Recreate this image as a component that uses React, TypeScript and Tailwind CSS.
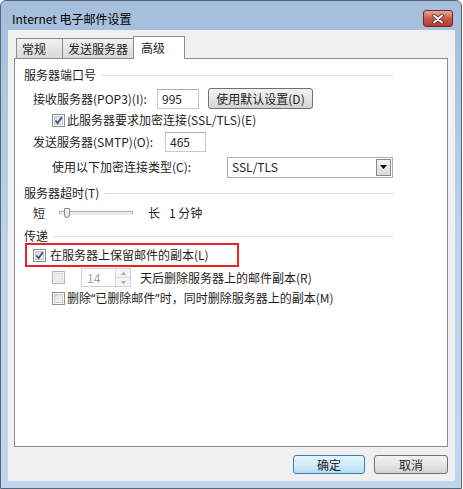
import React from 'react';

const font = "font-['Noto_Sans_CJK_SC','Noto_Sans',sans-serif]";

const CheckBox = ({ checked = false, disabled = false }: { checked?: boolean; disabled?: boolean }) => (
  <span
    className={`relative flex h-[13px] w-[13px] shrink-0 items-center justify-center border ${
      disabled ? 'border-[#b4b4b4] bg-[#f4f4f4]' : 'border-[#8e8f8f] bg-white'
    }`}
  >
    <span
      className={`h-[9px] w-[9px] border ${
        disabled
          ? 'border-[#e0e0e0] bg-[#eeeeee]'
          : 'border-[#c6c9ce] bg-gradient-to-br from-[#d9dce0] to-[#f7f7f7]'
      }`}
    />
    {checked && (
      <svg className="absolute left-0 top-0" width="11" height="11" viewBox="0 0 11 11">
        <path d="M2.5 5.5 L4.6 8.2 L8.8 2.2" fill="none" stroke="#3c4f86" strokeWidth="1.8" strokeLinejoin="round" />
      </svg>
    )}
  </span>
);

const GroupHeader = ({ label }: { label: string }) => (
  <div className="flex items-center pl-[9px]">
    <span className="whitespace-nowrap">{label}</span>
    <div className="ml-[5px] h-0 flex-1 border-t border-[#d5dfe5]" />
  </div>
);

const TextBox = ({ value, className }: { value: string; className: string }) => (
  <div
    className={`flex items-center border border-[#c4c8ce] border-t-[#abadb3] bg-white pl-[4px] ${className}`}
  >
    {value}
  </div>
);

const App = () => {
  return (
    <div className={`h-[489px] w-[463px] bg-white text-[12px] leading-[14px] text-[#1e1e1e] ${font}`}>
      <div className="flex h-[489px] w-[462px] flex-col rounded-t-[6px] border border-[#56667a] bg-gradient-to-b from-[#a4bedc] via-[#bcd3eb] to-[#bfd6ee]">
        {/* title bar */}
        <div className="flex h-[29px] shrink-0 items-start justify-between pl-[11px] pr-[8px]">
          <span className="mt-[11px] text-[12px] leading-[14px] text-black">Internet 电子邮件设置</span>
          <button className="mt-[9px] flex h-[17px] w-[30px] items-center justify-center rounded-[3px] border border-[#6a2a2a] bg-gradient-to-b from-[#e9a99b] via-[#c8584a] to-[#b93a2a]">
            <svg width="12" height="10" viewBox="0 0 12 10">
              <path d="M2 1.5 L10 8.5 M10 1.5 L2 8.5" stroke="#4b2121" strokeWidth="3.4" strokeLinecap="round" />
              <path d="M2 1.5 L10 8.5 M10 1.5 L2 8.5" stroke="#ffffff" strokeWidth="2" strokeLinecap="round" />
            </svg>
          </button>
        </div>

        {/* client area */}
        <div className="ml-[7px] flex h-[451px] w-[447px] flex-col bg-[#f0f0f0]">
          {/* tabs */}
          <div className="mt-[6px] flex h-[22px] items-end pl-[8px]">
            <div className="flex h-[20px] w-[47px] items-center border border-b-0 border-[#898c95] bg-gradient-to-b from-[#f2f2f2] to-[#d9d9d9] pl-[5px]">
              常规
            </div>
            <div className="-ml-px flex h-[20px] w-[72px] items-center border border-b-0 border-[#898c95] bg-gradient-to-b from-[#f2f2f2] to-[#d9d9d9] pl-[5px]">
              发送服务器
            </div>
            <div className="relative z-10 -mb-px -ml-px flex h-[23px] w-[52px] items-start border border-b-0 border-[#898c95] bg-white pl-[7px] pt-[4px]">
              高级
            </div>
          </div>

          {/* panel */}
          <div className="ml-[6px] flex h-[389px] w-[434px] flex-col border border-[#898c95] bg-white pr-[54px]">
            <div className="mt-[9px] h-[14px]">
              <GroupHeader label="服务器端口号" />
            </div>

            <div className="mt-[6px] flex h-[21px] items-center pl-[18px]">
              <span className="w-[124px] whitespace-nowrap">接收服务器(POP3)(I):</span>
              <TextBox value="995" className="h-[20px] w-[42px]" />
              <button className="ml-[9px] flex h-[21px] w-[105px] items-center justify-center rounded-[3px] border border-[#707070] bg-gradient-to-b from-[#f2f2f2] via-[#e6e6e6] to-[#d3d3d3]">
                使用默认设置(D)
              </button>
            </div>

            <div className="mt-[4px] flex h-[14px] items-center gap-[2px] pl-[37px]">
              <CheckBox checked />
              <span className="whitespace-nowrap">此服务器要求加密连接(SSL/TLS)(E)</span>
            </div>

            <div className="mt-[5px] flex h-[20px] items-center pl-[18px]">
              <span className="w-[132px] whitespace-nowrap">发送服务器(SMTP)(O):</span>
              <TextBox value="465" className="h-[20px] w-[41px]" />
            </div>

            <div className="mt-[5px] flex h-[20px] items-center pl-[37px]">
              <span className="w-[175px] whitespace-nowrap">使用以下加密连接类型(C):</span>
              <div className="flex h-[21px] w-[166px] items-center justify-between border border-[#abadb3] bg-white pl-[4px] pr-px">
                <span>SSL/TLS</span>
                <div className="flex h-[17px] w-[15px] items-center justify-center border border-[#8a8a8a] bg-gradient-to-b from-[#f4f4f4] to-[#dcdcdc]">
                  <svg width="7" height="4" viewBox="0 0 7 4">
                    <path d="M0 0 L7 0 L3.5 4 Z" fill="#000" />
                  </svg>
                </div>
              </div>
            </div>

            <div className="mt-[9px] h-[14px]">
              <GroupHeader label="服务器超时(T)" />
            </div>

            <div className="mt-[5px] flex h-[16px] items-center pl-[18px]">
              <span className="w-[26px]">短</span>
              <div className="relative flex h-[16px] w-[74px] items-center">
                <div className="h-[4px] w-full border border-[#b0b0b0] border-b-[#e7eaea] bg-[#e7eaea]" />
                <div className="absolute left-[5px] top-[3px] h-[10px] w-[6px] rounded-b-[3px] border border-[#8c8c8c] bg-gradient-to-b from-[#fbfbfb] to-[#d8d8d8]" />
              </div>
              <span className="ml-[15px]">长</span>
              <span className="ml-[9px] whitespace-nowrap">1 分钟</span>
            </div>

            <div className="mt-[10px] flex h-[12px] items-end">
              <div className="w-full">
                <GroupHeader label="传递" />
              </div>
            </div>

            <div className="ml-[10px] flex h-[24px] w-[214px] items-center gap-[4px] border-2 border-[#e8242a] pl-[6px]">
              <CheckBox checked />
              <span className="whitespace-nowrap">在服务器上保留邮件的副本(L)</span>
            </div>

            <div className="mt-[1px] flex h-[19px] items-center pl-[37px]">
              <CheckBox disabled />
              <div className="ml-[16px] flex h-[19px] w-[50px] items-center justify-between border border-[#d0d2d6] bg-white pl-[5px]">
                <span className="text-[#a0a0a0]">14</span>
                <div className="flex h-[17px] w-[15px] flex-col border-l border-[#dcdcdc]">
                  <div className="flex flex-1 items-center justify-center border-b border-[#dcdcdc] bg-[#f4f4f4]">
                    <svg width="5" height="3" viewBox="0 0 5 3">
                      <path d="M0 3 L5 3 L2.5 0 Z" fill="#a8a8a8" />
                    </svg>
                  </div>
                  <div className="flex flex-1 items-center justify-center bg-[#f4f4f4]">
                    <svg width="5" height="3" viewBox="0 0 5 3">
                      <path d="M0 0 L5 0 L2.5 3 Z" fill="#a8a8a8" />
                    </svg>
                  </div>
                </div>
              </div>
              <span className="ml-[9px] whitespace-nowrap">天后删除服务器上的邮件副本(R)</span>
            </div>

            <div className="mt-[3px] flex h-[16px] items-center gap-[2px] pl-[37px]">
              <CheckBox />
              <span className="whitespace-nowrap">
                删除<span className="font-['Noto_Sans',sans-serif]">“</span>已删除邮件
                <span className="font-['Noto_Sans',sans-serif]">”</span>时，同时删除服务器上的副本(M)
              </span>
            </div>
          </div>

          {/* buttons */}
          <div className="mt-[8px] flex justify-end gap-[9px] pr-[7px]">
            <button className="flex h-[19px] w-[72px] items-center justify-center rounded-[3px] border border-[#3c7fb1] bg-gradient-to-b from-[#e6f5fd] via-[#d3edfb] to-[#b5dcf3]">
              确定
            </button>
            <button className="flex h-[19px] w-[74px] items-center justify-center rounded-[3px] border border-[#707070] bg-gradient-to-b from-[#f2f2f2] via-[#e6e6e6] to-[#d3d3d3]">
              取消
            </button>
          </div>
        </div>
      </div>
    </div>
  );
};

export default App;
